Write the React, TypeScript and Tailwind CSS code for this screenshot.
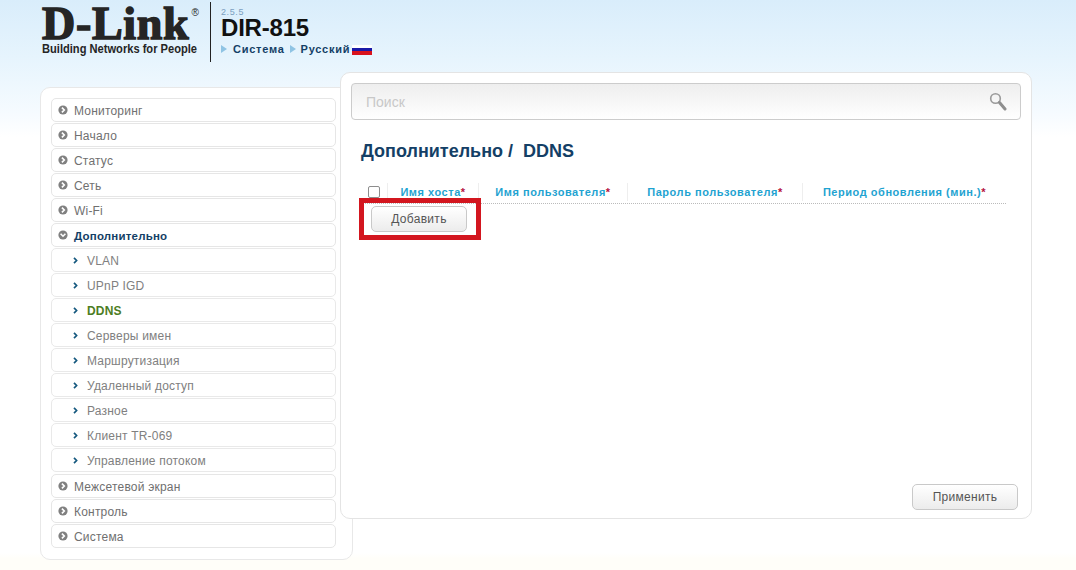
import React from "react";

const Circle = ({ open }: { open?: boolean }) => (
  <svg width="10" height="10" viewBox="0 0 10 10" className="shrink-0">
    <circle cx="5" cy="5" r="4.6" fill="#808080" />
    {open ? (
      <path d="M2.6 3.8 5 6.2 7.4 3.8" fill="none" stroke="#fff" strokeWidth="1.6" />
    ) : (
      <path d="M3.9 2.6 6.3 5 3.9 7.4" fill="none" stroke="#fff" strokeWidth="1.6" />
    )}
  </svg>
);

const Chev = () => (
  <svg width="5" height="7" viewBox="0 0 5 7" className="shrink-0">
    <path d="M1 .8 3.6 3.5 1 6.2" fill="none" stroke="#15597f" strokeWidth="1.7" />
  </svg>
);

const Tri = () => (
  <svg width="6" height="8" viewBox="0 0 6 8" className="shrink-0">
    <path d="M0 0 6 4 0 8Z" fill="#8fc4e4" />
  </svg>
);

const Top = ({ label, open, className = "" }: { label: string; open?: boolean; className?: string }) => (
  <div className={`h-6 rounded-[5px] border border-[#e6e6e6] bg-white flex items-center pl-[6px] gap-[6px] ${className}`}>
    <Circle open={open} />
    <span className={open ? "pt-[2px] font-bold text-[11.5px] text-[#143f66]" : "pt-[2px] text-[#707070]"}>{label}</span>
  </div>
);

const Sub = ({ label, active }: { label: string; active?: boolean }) => (
  <div className="h-6 rounded-[5px] border border-[#e9e9e9] bg-white flex items-center pl-[21px] gap-[9px]">
    <Chev />
    <span className={active ? "pt-[2px] font-bold text-[#4c7d23]" : "pt-[2px] text-[#808080]"}>{label}</span>
  </div>
);

const Th = ({ label, className }: { label: string; className: string }) => (
  <div className={`h-[18px] flex items-center justify-center border-r border-[#eeeeee] ${className}`}>
    <span className="font-bold text-[#1fa3d1]">
      {label}
      <span className="text-[#b5123f]">*</span>
    </span>
  </div>
);

const Btn = ({ label, className }: { label: string; className: string }) => (
  <button className={`rounded-[5px] border border-[#c9c9c9] bg-gradient-to-b from-white to-[#ececec] text-[#555555] text-[12px] tracking-[0.3px] ${className}`}>
    {label}
  </button>
);

export default function App() {
  return (
    <div className="relative h-[570px] w-[1076px] overflow-hidden bg-[linear-gradient(#d9edfb_0%,#e6f4fd_10%,#f6fbff_20%,#ffffff_24%,#ffffff_97%,#fffef9_98%)] font-['Liberation_Sans',Arial,sans-serif]">
      <header className="h-[72px] flex items-start pl-[42px]">
        <div className="w-[156px] pt-[6px] text-[#252525]">
          <div className="flex h-[36px] items-start whitespace-nowrap">
            <span className="font-['Liberation_Serif',serif] font-bold text-[46px] leading-[36px] tracking-[0.7px] [-webkit-text-stroke:1.5px_#252525]">D-Link</span>
            <span className="ml-[2px] mt-[2px] text-[10px] leading-[10px]">®</span>
          </div>
          <div className="w-[178px] origin-left scale-x-[0.855] font-bold text-[13px] leading-[13px] whitespace-nowrap">Building Networks for People</div>
        </div>
        <div className="ml-[12px] mt-[2px] h-[60px] w-px bg-[#222222]" />
        <div className="ml-[10px] pt-[8px]">
          <div className="text-[9px] leading-[9px] tracking-[0.6px] text-[#7b9fc0]">2.5.5</div>
          <div className="text-[24px] leading-[21px] font-bold text-[#111111] tracking-[-0.2px]">DIR-815</div>
          <div className="mt-[5px] flex items-center text-[11px] leading-[12px] font-bold tracking-[0.75px] text-[#143f66]">
            <Tri />
            <span className="ml-[6px]">Система</span>
            <span className="ml-[5px]"><Tri /></span>
            <span className="ml-[5px]">Русский</span>
            <span className="ml-[2px] mt-[1px] flex h-[10px] w-[20px] flex-col">
              <span className="h-[3px] bg-white" />
              <span className="h-[3px] bg-[#1a1aa8]" />
              <span className="h-[4px] bg-[#d8121c]" />
            </span>
          </div>
        </div>
      </header>

      <main className="flex items-start pl-[40px]">
        <aside className="mt-[15px] w-[313px] h-[473px] shrink-0 rounded-[10px] border border-[#e8e8e8] bg-white pl-[10px] pr-[16px] pt-[10px] text-[12px] leading-[16px] tracking-[0.2px]">
          <div className="flex flex-col gap-px">
            {["Мониторинг", "Начало", "Статус", "Сеть", "Wi-Fi"].map((l) => (
              <Top key={l} label={l} />
            ))}
            <Top label="Дополнительно" open />
            {["VLAN", "UPnP IGD"].map((l) => (
              <Sub key={l} label={l} />
            ))}
            <Sub label="DDNS" active />
            {["Серверы имен", "Маршрутизация", "Удаленный доступ", "Разное", "Клиент TR-069", "Управление потоком"].map((l) => (
              <Sub key={l} label={l} />
            ))}
            <Top label="Межсетевой экран" className="mt-px" />
            <Top label="Контроль" />
            <Top label="Система" />
          </div>
        </aside>

        <section className="relative -ml-[13px] w-[692px] h-[447px] shrink-0 flex flex-col rounded-[10px] border border-[#e4e4e4] bg-white pl-[10px] pr-[10px] pt-[10px]">
          <div className="h-[37px] rounded-[4px] border border-[#cccccc] bg-gradient-to-b from-[#eeeeee] to-white flex items-center justify-between pl-[14px] pr-[13px]">
            <span className="text-[14px] leading-[22px] pt-[1px] text-[#c8c8c8]">Поиск</span>
            <svg width="18" height="20" viewBox="0 0 18 20">
              <circle cx="6.5" cy="6.5" r="4.8" fill="none" stroke="#9a9a9a" strokeWidth="1.6" />
              <path d="M10.5 10.5 16 17" stroke="#8e8e8e" strokeWidth="3" strokeLinecap="round" />
            </svg>
          </div>
          <h1 className="mt-[20px] ml-[10px] text-[18px] leading-[22px] font-bold text-[#143f66] whitespace-pre">{"Дополнительно /  DDNS"}</h1>

          <div className="mt-[21px] ml-[8px] w-[647px] flex items-center border-b border-dotted border-[#bbbbbb] pb-[2px] text-[11px] tracking-[0.54px]">
            <div className="w-[29px] flex justify-center pl-[1px] border-r border-[#eeeeee] h-[18px] items-center">
              <span className="h-3 w-3 rounded-[2px] border border-[#8d8d8d] bg-white" />
            </div>
            <Th label="Имя хоста" className="w-[91px]" />
            <Th label="Имя пользователя" className="w-[149px]" />
            <Th label="Пароль пользователя" className="w-[175px]" />
            <Th label="Период обновления (мин.)" className="w-[203px] border-r-0" />
          </div>

          <Btn label="Добавить" className="mt-[2px] ml-[20px] h-[26px] w-[96px] shrink-0" />

          <div className="mt-auto flex justify-end pb-[8px] pr-[3px]">
            <Btn label="Применить" className="h-[26px] w-[106px]" />
          </div>

          <div className="absolute left-[18px] top-[125px] h-[42px] w-[122px] border-[5px] border-[#d3161f]" />
        </section>
      </main>
    </div>
  );
}
